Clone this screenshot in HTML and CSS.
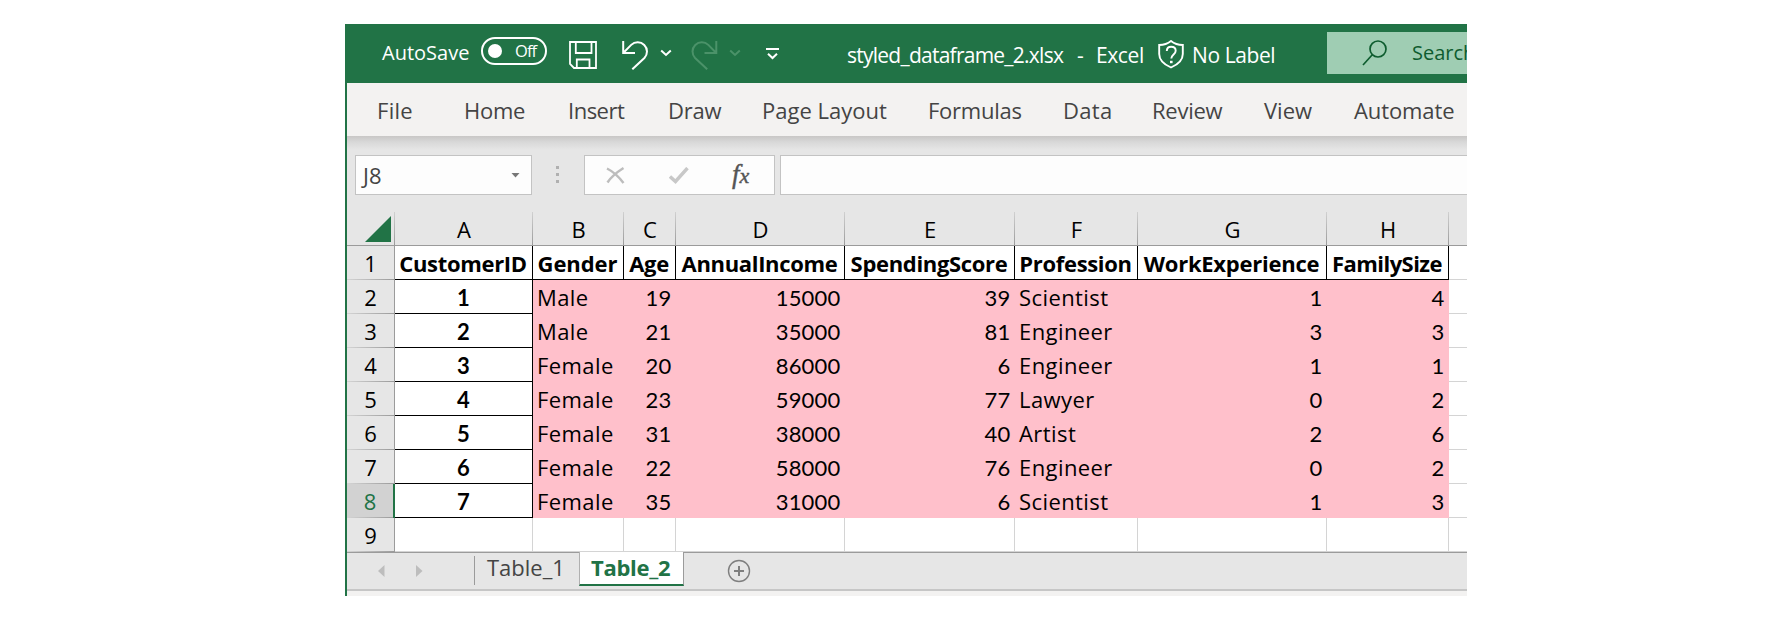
FILE: index.html
```html
<!DOCTYPE html>
<html lang="en">
<head>
<meta charset="utf-8">
<title>styled_dataframe_2.xlsx - Excel</title>
<link rel="stylesheet" href="styles.css">
</head>
<body>
<div class="window">
  <header class="titlebar">
    <span class="autosave">AutoSave</span>
    <span class="toggle"><i class="knob"></i><span class="off">Off</span></span>
    <svg class="ic-save" width="28" height="28" viewBox="0 0 28 28" fill="none" stroke="#fff" stroke-width="1.8"><path d="M1 1H27V27H5L1 23ZM6.8 1V12H22.5V1M7.8 27V18.5H20.5V27"/></svg>
    <svg class="ic-undo" width="27" height="29" viewBox="0 0 27 29" fill="none" stroke="#fff" stroke-width="2"><path d="M1.2 0V12H13M1.2 12L9.2 3.9A9.3 9.3 0 0 1 22.4 17L10.3 28.3"/></svg>
    <svg class="ic-chev" width="12" height="8" viewBox="0 0 12 8" fill="none" stroke="#fff" stroke-width="2"><path d="M1.2 1.5L6 6L10.8 1.5"/></svg>
    <svg class="ic-redo" width="27" height="29" viewBox="0 0 27 29" fill="none" stroke="#4b9269" stroke-width="2"><path d="M25.3 0V12H13.5M25.3 12L17.3 3.9A9.3 9.3 0 0 0 4.1 17L16.2 28.3"/></svg>
    <svg class="ic-chev" width="12" height="8" viewBox="0 0 12 8" fill="none" stroke="#4b9269" stroke-width="2"><path d="M1.2 1.5L6 6L10.8 1.5"/></svg>
    <svg class="ic-more" width="13" height="12" viewBox="0 0 13 12" fill="none" stroke="#fff" stroke-width="2"><path d="M0 1H13M2 5.7L6.5 10L11 5.7"/></svg>
    <span class="doc name">styled_dataframe_2.xlsx</span>
    <span class="doc">-</span>
    <span class="doc">Excel</span>
    <svg class="ic-shield" width="26" height="29" viewBox="0 0 26 29" fill="none" stroke="#fff" stroke-width="1.9"><path d="M13 1C10 3.5 6 5 1.2 5V14C1.2 20 6 24.5 13 27.5C20 24.5 24.8 20 24.8 14V5C20 5 16 3.5 13 1Z"/><path d="M8.8 11C8.8 8 10.5 6.7 13.2 6.7C16 6.7 17.7 8.3 17.7 10.7C17.7 14.5 13.3 14.4 13.3 18.6"/><path d="M13.3 20.8V23.2" stroke-width="2.6"/></svg>
    <span class="doc">No Label</span>
    <div class="search">
      <svg class="ic-search" width="26" height="27" viewBox="0 0 26 27" fill="none" stroke="#0e5c2f" stroke-width="1.7"><circle cx="16" cy="9" r="8"/><path d="M10.3 14.7L1 25"/></svg>
      <span>Search</span>
    </div>
  </header>
  <nav class="ribbon">
    <span class="s-file">File</span><span>Home</span><span class="s-ins">Insert</span><span>Draw</span><span class="s-page">Page Layout</span><span>Formulas</span><span class="s-data">Data</span><span>Review</span><span class="s-view">View</span><span class="s-auto">Automate</span>
  </nav>
  <div class="formula">
    <div class="box namebox"><span>J8</span><svg width="10" height="5" viewBox="0 0 10 5"><path d="M0.500 0H8.500L4.500 4.500Z" fill="#777"/></svg></div>
    <div class="dots"><i></i><i></i><i></i></div>
    <div class="box actions">
      <svg width="19" height="17" viewBox="0 0 19 17" fill="none" stroke="#bdbdbd" stroke-width="2.4"><path d="M1 1.5C6 4 13 10 17.5 16M17.5 1C12 4.500 5 10 1.500 15.500"/></svg>
      <svg width="20" height="17" viewBox="0 0 20 17" fill="none" stroke="#c8c8c8" stroke-width="3.4"><path d="M1 9.500L6.500 14.500L18.500 1"/></svg>
      <span class="fx">f<small>x</small></span>
    </div>
    <div class="box input"></div>
  </div>
  <main class="sheet">
    <div class="corner"><svg width="26" height="26" viewBox="0 0 26 26"><path d="M26 0V26H0Z" fill="#217346"/></svg></div>
    <div class="col">A</div><div class="col">B</div><div class="col">C</div><div class="col">D</div><div class="col">E</div><div class="col">F</div><div class="col">G</div><div class="col">H</div><div class="col last"></div>

    <div class="row">1</div><div class="th">CustomerID</div><div class="th gender">Gender</div><div class="th">Age</div><div class="th">AnnualIncome</div><div class="th">SpendingScore</div><div class="th">Profession</div><div class="th work">WorkExperience</div><div class="th size">FamilySize</div><div class="blank"></div>
    <div class="row">2</div><div class="id">1</div><div class="td">Male</div><div class="num">19</div><div class="num">15000</div><div class="num">39</div><div class="td">Scientist</div><div class="num">1</div><div class="num">4</div><div class="blank"></div>
    <div class="row">3</div><div class="id">2</div><div class="td">Male</div><div class="num">21</div><div class="num">35000</div><div class="num">81</div><div class="td">Engineer</div><div class="num">3</div><div class="num">3</div><div class="blank"></div>
    <div class="row">4</div><div class="id">3</div><div class="td">Female</div><div class="num">20</div><div class="num">86000</div><div class="num">6</div><div class="td">Engineer</div><div class="num">1</div><div class="num">1</div><div class="blank"></div>
    <div class="row">5</div><div class="id">4</div><div class="td">Female</div><div class="num">23</div><div class="num">59000</div><div class="num">77</div><div class="td">Lawyer</div><div class="num">0</div><div class="num">2</div><div class="blank"></div>
    <div class="row">6</div><div class="id">5</div><div class="td">Female</div><div class="num">31</div><div class="num">38000</div><div class="num">40</div><div class="td">Artist</div><div class="num">2</div><div class="num">6</div><div class="blank"></div>
    <div class="row">7</div><div class="id">6</div><div class="td">Female</div><div class="num">22</div><div class="num">58000</div><div class="num">76</div><div class="td">Engineer</div><div class="num">0</div><div class="num">2</div><div class="blank"></div>
    <div class="row current">8</div><div class="id">7</div><div class="td">Female</div><div class="num">35</div><div class="num">31000</div><div class="num">6</div><div class="td">Scientist</div><div class="num">1</div><div class="num">3</div><div class="blank"></div>
    <div class="row">9</div><div class="empty"></div><div class="empty"></div><div class="empty"></div><div class="empty"></div><div class="empty"></div><div class="empty"></div><div class="empty"></div><div class="empty"></div><div class="blank"></div>
  </main>
  <footer class="tabs">
    <svg class="arrow-l" width="7" height="12" viewBox="0 0 7 12"><path d="M6.500 0V12L0 6Z" fill="#bdbdbd"/></svg>
    <svg class="arrow-r" width="7" height="12" viewBox="0 0 7 12"><path d="M0 0V12L6.500 6Z" fill="#bdbdbd"/></svg>
    <span class="tab">Table_1</span>
    <span class="tab active">Table_2</span>
    <svg class="add" width="24" height="24" viewBox="0 0 24 24" fill="none" stroke="#7f7f7f"><circle cx="12" cy="12" r="10.500" stroke-width="1.400"/><path d="M12 7V17M7 12H17" stroke-width="2"/></svg>
  </footer>
  <div class="status"></div>
</div>
</body>
</html>
```

FILE: styles.css
```css
* { box-sizing: border-box; }
body {
  margin: 0;
  background: #fff;
  font-family: "Open Sans", "Noto Sans", sans-serif;
  font-size: 22px;
}
svg { display: block; flex-shrink: 0; }
.window {
  width: 1122px;
  height: 572px;
  margin: 24px 0 0 345px;
  border-left: 2px solid #217346;
  overflow: hidden;
  background: #e6e6e6;
  white-space: nowrap;
}

/* Title bar */
.titlebar {
  display: grid;
  grid-template-columns: 99px 87px 54px 38px 31px 38px 37px 81px 230px 19px 62px 34px 135px 140px;
  height: 59px;
  padding-left: 35px;
  background: #217346;
  color: #fff;
}
.autosave { font-size: 20px; line-height: 57px; }
.toggle {
  display: flex;
  align-items: center;
  width: 66px;
  height: 28px;
  margin-top: 13px;
  border: 2px solid #fff;
  border-radius: 14px;
}
.knob { width: 14px; height: 14px; margin-left: 5px; border-radius: 50%; background: #fff; }
.off { margin-left: 13px; font-size: 16.5px; line-height: 24px; letter-spacing: -0.9px; }
.ic-save { margin: 17px 0 0 1px; }
.ic-undo { margin-top: 17px; }
.ic-chev { margin-top: 25px; }
.ic-redo { margin-top: 17px; }
.ic-more { margin-top: 24px; }
.doc { font-size: 21px; line-height: 63px; letter-spacing: -0.4px; }
.name { letter-spacing: -0.75px; }
.ic-shield { margin-top: 16px; }
.search {
  display: flex;
  height: 42px;
  margin-top: 8px;
  padding-left: 35px;
  background: #9fcdb3;
  color: #0e5c2f;
  font-size: 20px;
  line-height: 41px;
}
.ic-search { margin: 8px 24px 0 0; }

/* Ribbon */
.ribbon {
  display: grid;
  grid-template-columns: 87px 104px 100px 94px 166px 135px 89px 112px 89px 112px;
  height: 53px;
  padding-left: 30px;
  background: #f3f2f1;
  color: #444;
  line-height: 55px;
  letter-spacing: -0.25px;
}
.s-file, .s-data { letter-spacing: 0.3px; }
.s-ins { letter-spacing: -0.5px; }
.s-page, .s-view { letter-spacing: 0; }
.s-auto { margin-left: 1px; letter-spacing: -0.1px; }

/* Formula bar */
.formula {
  display: flex;
  height: 76px;
  padding: 19px 0 0 8px;
  background: linear-gradient(#c8c7c6, #d8d8d8 6px, #e6e6e6 14px);
}
.box { height: 40px; border: 1px solid #c3c3c3; background: #fdfdfd; }
.namebox {
  display: flex;
  align-items: center;
  justify-content: space-between;
  width: 177px;
  padding: 0 10px 0 7px;
  color: #444;
  line-height: 38px;
}
.dots { display: grid; gap: 4px; align-content: start; margin: 11px 25px 0 24px; }
.dots i { width: 3px; height: 3px; background: #b0b0b0; }
.actions { display: flex; align-items: center; width: 191px; padding-left: 21px; }
.actions svg + svg { margin-left: 44px; }
.fx {
  margin-left: 43px;
  color: #555;
  font: italic 27px/34px "Liberation Serif", serif;
  -webkit-text-stroke: 0.4px #555;
}
.fx small { font-size: 22px; }
.input { flex: 1; margin-left: 5px; border-right: 0; }

/* Sheet grid */
.sheet {
  display: grid;
  grid-template-columns: 48px 138px 91px 52px 169px 170px 123px 189px 122px 18px;
  grid-template-rows: repeat(10, 34px);
  line-height: 35px;
  background: #fff;
  color: #000;
}
.corner {
  padding: 4px 0 0 18px;
  border-bottom: 1px solid #9b9b9b;
  background: linear-gradient(#d0d0d0, #9b9b9b) right / 1px 100% no-repeat #e6e6e6;
}
.col {
  border-bottom: 1px solid #9b9b9b;
  background: linear-gradient(#d0d0d0, #9b9b9b) right / 1px 100% no-repeat #e6e6e6;
  line-height: 34px;
  text-align: center;
}
.last { background: #e6e6e6; }
.row {
  border-right: 1px solid #9b9b9b;
  background: linear-gradient(90deg, #d4d4d4, #9b9b9b) bottom / 100% 1px no-repeat #e6e6e6;
  text-align: center;
}
.current { border-right: 2px solid #217346; background-color: #d2d2d2; color: #217346; }
.th, .id {
  border-right: 1px solid #000;
  border-bottom: 1px solid #000;
  font-weight: 700;
  text-align: center;
}
.th { padding-right: 1px; letter-spacing: -0.33px; }
.gender { letter-spacing: -0.05px; }
.work { letter-spacing: -0.25px; }
.size { letter-spacing: -0.55px; }
.id, .num { font-family: Lato, "Open Sans", sans-serif; }
.td, .num { background: #ffc0cb; }
.td { padding-left: 4px; letter-spacing: 0.42px; }
.num { padding-right: 4.5px; letter-spacing: 0.2px; text-align: right; }
.empty { border-right: 1px solid #d4d4d4; border-bottom: 1px solid #d4d4d4; }
.blank { border-bottom: 1px solid #d4d4d4; }

/* Sheet tabs */
.tabs {
  display: flex;
  height: 37px;
  border-top: 1px solid #9b9b9b;
  line-height: 31px;
}
.arrow-l { margin: 12px 31px 0 31px; }
.arrow-r { margin: 12px 51px 0 0; }
.tab {
  height: 29px;
  margin-top: 3px;
  padding-left: 12px;
  width: 105px;
  border-left: 1px solid #9b9b9b;
  color: #444;
  line-height: 23px;
}
.active {
  height: 34px;
  margin-top: -1px;
  padding-left: 11px;
  border-left-color: #b0b0b0;
  border-right: 1px solid #9b9b9b;
  border-bottom: 2px solid #217346;
  background: #fff;
  color: #217346;
  font-weight: 700;
  line-height: 31px;
  letter-spacing: -0.3px;
}
.add { margin: 6px 0 0 43px; }
.status { height: 7px; border-top: 2px solid #c6c6c6; background: #f3f2f1; }
```
